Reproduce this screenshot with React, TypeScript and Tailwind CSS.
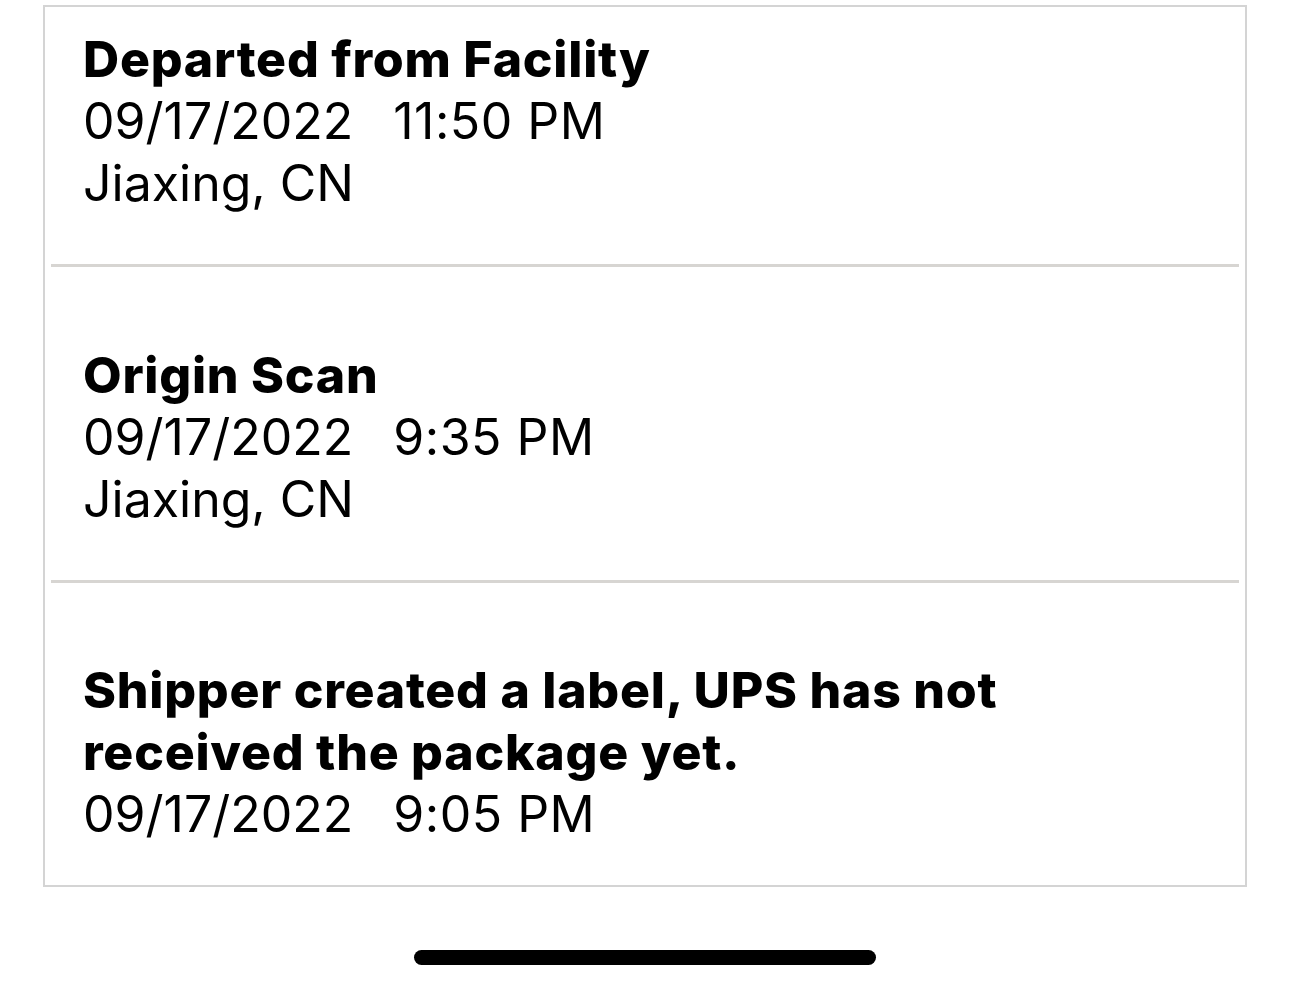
import React from "react";

type Scan = {
  status: string;
  date: string;
  time: string;
  place?: string;
};

const scans: Scan[] = [
  { status: "Departed from Facility", date: "09/17/2022", time: "11:50 PM", place: "Jiaxing, CN" },
  { status: "Origin Scan", date: "09/17/2022", time: "9:35 PM", place: "Jiaxing, CN" },
  {
    status: "Shipper created a label, UPS has not received the package yet.",
    date: "09/17/2022",
    time: "9:05 PM",
  },
];

const padTop = ["pt-[21px]", "pt-[77px]", "pt-[76px]"];
const padBottom = ["pb-[50px]", "pb-[50px]", "pb-[40px]"];

function ScanRow({ scan, index }: { scan: Scan; index: number }) {
  return (
    <div className={`${padTop[index]} ${padBottom[index]} pl-[38px] pr-6`}>
      <p className="font-extrabold text-[50px] leading-[62px] tracking-[0.75px] max-w-[960px]">{scan.status}</p>
      <p className="text-[50px] leading-[62px]">
        <span>{scan.date}</span>
        <span className="ml-[40px] tracking-[0.5px]">{scan.time}</span>
      </p>
      {scan.place && <p className="text-[50px] leading-[62px]">{scan.place}</p>}
    </div>
  );
}

export default function App() {
  return (
    <div className="w-[1290px] h-[989px] bg-white text-black font-['Inter',_'Liberation_Sans',_sans-serif] flex flex-col items-center overflow-hidden">
      {/* Carte des événements de suivi */}
      <div className="mt-[5px] w-[1204px] border-2 border-[#d4d4d4] flex flex-col">
        {scans.map((scan, i) => (
          <React.Fragment key={i}>
            {i > 0 && <div className="mx-[6px] h-[3px] bg-[#d7d5d2]" />}
            <ScanRow scan={scan} index={i} />
          </React.Fragment>
        ))}
      </div>

      {/* Indicateur d'accueil */}
      <div className="mt-[63px] w-[462px] h-[15px] rounded-full bg-black" />
    </div>
  );
}
